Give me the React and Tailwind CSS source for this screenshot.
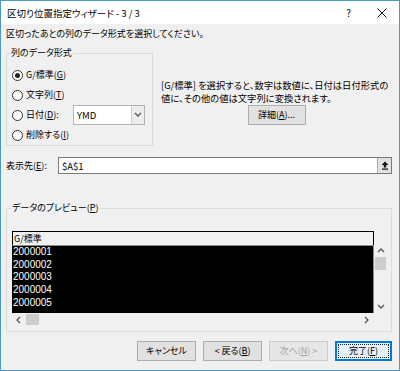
import React from 'react';

const Radio = ({ checked, children }) => (
  <div className="flex items-center h-[20px] ml-[1px]">
    <span className="w-[11px] h-[11px] rounded-full border border-[#333333] bg-white flex items-center justify-center mr-[3px] shrink-0">
      {checked && <span className="w-[5px] h-[5px] rounded-full bg-[#222222]" />}
    </span>
    {children}
  </div>
);

const Btn = ({ children, disabled, primary, className = '' }) => (
  <div
    className={`h-[20px] flex items-center justify-center border ${
      primary
        ? 'border-[#0078d7] bg-[#e5f1fb] shadow-[inset_0_0_0_1px_#0078d7]'
        : disabled
        ? 'border-[#cbcbcb] bg-[#e6e6e6] text-[#a2a2a2]'
        : 'border-[#adadad] bg-[#e1e1e1]'
    } ${className}`}
  >
    {primary ? (
      <span className="w-[51px] h-[14px] border border-dotted border-[#222] flex items-center justify-center">
        {children}
      </span>
    ) : (
      children
    )}
  </div>
);

const Chevron = ({ dir }) => {
  const pts = {
    up: '1,5 4,2 7,5',
    down: '1,2 4,5 7,2',
    left: '5,1 2,4 5,7',
    right: '2,1 5,4 2,7',
  }[dir];
  return (
    <svg width="8" height="8" viewBox="0 0 8 8">
      <polyline points={pts} fill="none" stroke="#555" strokeWidth="1.3" />
    </svg>
  );
};

const rows = ['2000001', '2000002', '2000003', '2000004', '2000005'];

export default function App() {
  return (
    <div className="w-[400px] h-[371px] border border-[#4a98c9] bg-[#f0f0f0] flex flex-col text-[9px] leading-[12px] text-black font-['Noto_Sans_CJK_JP',sans-serif] [font-feature-settings:'palt'] overflow-hidden">
      {/* title bar */}
      <div className="h-[23px] bg-white flex items-center pl-[6px] pr-[12px] shrink-0">
        <span className="text-[9.5px]">区切り位置指定ウィザード - 3 / 3</span>
        <span className="ml-auto text-[10px] mr-[26px]">?</span>
        <svg width="10" height="10" viewBox="0 0 10 10">
          <path d="M0.5 0.5 L9.5 9.5 M9.5 0.5 L0.5 9.5" stroke="#111" strokeWidth="1" />
        </svg>
      </div>

      <div className="flex flex-col pl-[5px] pr-[7px]">
        <p className="mt-[4px] whitespace-nowrap">区切ったあとの列のデータ形式を選択してください。</p>

        <div className="flex mt-[7px]">
          <fieldset className="w-[147px] border border-[#dcdcdc] px-[4px] pt-[6px] pb-0">
            <legend className="px-[1px] ml-[-1px]">列のデータ形式</legend>
            <Radio checked>
              <span>G/標準(<u>G</u>)</span>
            </Radio>
            <Radio>
              <span>文字列(<u>T</u>)</span>
            </Radio>
            <Radio>
              <span className="w-[46px]">日付(<u>D</u>):</span>
              <div className="ml-[1px] w-[72px] h-[20px] border border-[#b4b4b4] bg-white flex">
                <span className="flex-1 flex items-center pl-[3px] text-[9.5px]">YMD</span>
                <span className="w-[13px] border-l border-[#cfcfcf] bg-[#ececec] flex items-center justify-center">
                  <Chevron dir="down" />
                </span>
              </div>
            </Radio>
            <Radio>
              <span>削除する(<u>I</u>)</span>
            </Radio>
          </fieldset>

          <div className="flex-1 pl-[8px] flex flex-col items-center">
            <p className="mt-[32px] self-stretch text-[9.3px] leading-[12.5px] whitespace-nowrap">
              [G/標準] を選択すると、数字は数値に、日付は日付形式の
              <br />
              値に、その他の値は文字列に変換されます。
            </p>
            <Btn className="w-[58px] mt-[1px]">
              詳細(<u>A</u>)...
            </Btn>
          </div>
        </div>

        {/* destination */}
        <div className="flex items-center mt-[11px] h-[17px]">
          <span className="w-[52px] whitespace-nowrap">表示先(<u>E</u>):</span>
          <div className="flex-1 h-[17px] border border-[#7a7a7a] bg-white flex">
            <span className="flex-1 flex items-center pl-[3px] text-[9.5px]">$A$1</span>
            <span className="w-[14px] border-l border-[#adadad] bg-[#e1e1e1] flex items-center justify-center">
              <svg width="8" height="9" viewBox="0 0 8 9">
                <path d="M4 0.5 L7.5 4 L5.2 4 L5.2 6.5 L2.8 6.5 L2.8 4 L0.5 4 Z" fill="#111" />
                <rect x="1" y="7.5" width="6" height="1.2" fill="#111" />
              </svg>
            </span>
          </div>
        </div>

        {/* preview */}
        <fieldset className="mt-[28px] w-[386px] border border-[#dcdcdc] pl-[5px] pr-[4px] pt-[17px] pb-[5px]">
          <legend className="px-[1px] ml-[-1px]">
            データのプレビュー(<u>P</u>)
          </legend>
          <div className="grid grid-cols-[362px_13px] grid-rows-[14px_68px_13px]">
            <div className="border-t border-l border-r border-black bg-[#f0f0f0] pl-[1px] leading-[13px]">G/標準</div>
            <div />
            <div className="bg-black border-t border-[#8a8a8a] border-r font-['Liberation_Sans_Narrow','Liberation_Sans',sans-serif] text-white text-[10px] leading-[12.7px] pl-[1px]">
              {rows.map((r) => (
                <div key={r}>{r}</div>
              ))}
            </div>
            <div className="flex flex-col items-center bg-[#f0f0f0]">
              <div className="h-[12px] flex items-center justify-center">
                <Chevron dir="up" />
              </div>
              <div className="w-[11px] h-[13px] bg-[#cdcdcd]" />
              <div className="mt-auto h-[12px] flex items-center justify-center">
                <Chevron dir="down" />
              </div>
            </div>
            <div className="flex items-center bg-[#f0f0f0]">
              <div className="w-[14px] flex items-center justify-center">
                <Chevron dir="left" />
              </div>
              <div className="w-[13px] h-[11px] bg-[#cdcdcd]" />
              <div className="ml-auto w-[14px] flex items-center justify-center">
                <Chevron dir="right" />
              </div>
            </div>
            <div />
          </div>
        </fieldset>

        {/* buttons */}
        <div className="flex justify-end gap-[7px] mt-[9px]">
          <Btn className="w-[59px]">キャンセル</Btn>
          <Btn className="w-[59px]">
            &lt; 戻る(<u>B</u>)
          </Btn>
          <Btn disabled className="w-[59px]">
            次へ(<u>N</u>) &gt;
          </Btn>
          <Btn primary className="w-[57px]">
            完了(<u>F</u>)
          </Btn>
        </div>
      </div>
    </div>
  );
}
